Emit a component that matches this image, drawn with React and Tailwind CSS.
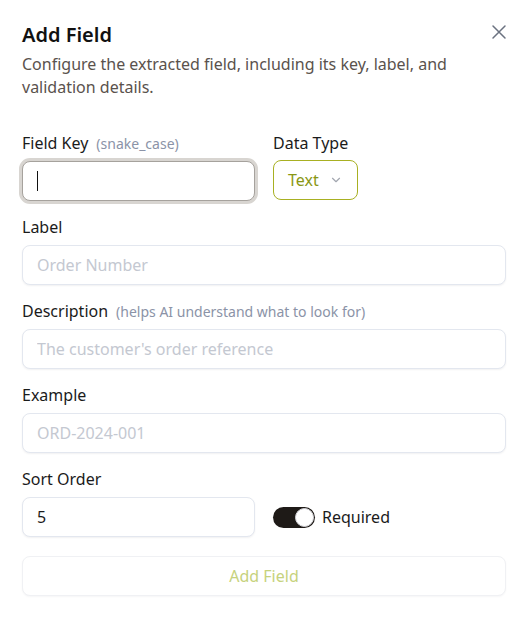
const Label = ({ children, hint }) => (
  <div className="flex items-baseline h-5 mb-2">
    <span className="text-base leading-5 text-[#1b1b1b]">{children}</span>
    {hint && <span className="ml-2 text-sm leading-5 text-[#8b93a7]">{hint}</span>}
  </div>
);

const Input = ({ placeholder, value }) => (
  <input
    readOnly
    value={value}
    placeholder={placeholder}
    className="w-full h-10 px-[14px] rounded-lg border border-[#e3e7ef] bg-white text-base text-[#1b1b1b] placeholder:text-[#c4c8d1] shadow-[0_1px_2px_rgba(16,24,40,0.06)] outline-none"
  />
);

export default function App() {
  return (
    <div
      className="min-h-[640px] bg-white pl-[22px] pr-6 pt-[21px]"
      style={{ fontFamily: '"Noto Sans", "Open Sans", sans-serif' }}
    >
      {/* Header */}
      <div className="flex items-start justify-between">
        <h1 className="text-xl leading-7 font-semibold text-[#111111]">Add Field</h1>
        <button className="mt-[3px] mr-[-1px] text-[#6b7280]">
          <svg width="16" height="16" viewBox="0 0 16 16" fill="none" stroke="currentColor" strokeWidth="1.5" strokeLinecap="round">
            <path d="M2 2l12 12M14 2L2 14" />
          </svg>
        </button>
      </div>
      <p className="mt-[4px] text-base leading-[23px] text-[#5a524d]">
        Configure the extracted field, including its key, label, and validation details.
      </p>

      {/* Form */}
      <div className="mt-[34px] flex flex-col gap-4">
        <div className="grid grid-cols-2 gap-[18px]">
          <div>
            <Label hint="(snake_case)">Field Key</Label>
            <div className="h-10 px-[14px] flex items-center rounded-lg border border-[#a6a29d] bg-white ring-[3px] ring-[#d8d5d1]">
              <span className="w-px h-5 bg-[#111111]" />
            </div>
          </div>
          <div>
            <Label>Data Type</Label>
            <button className="h-10 -mt-[1px] pl-[14px] pr-[14px] flex items-center gap-[10px] rounded-lg border border-[#a8b022] bg-white text-base text-[#8a9714]">
              Text
              <svg width="14" height="14" viewBox="0 0 24 24" fill="none" stroke="#a3a7b0" strokeWidth="2" strokeLinecap="round" strokeLinejoin="round">
                <path d="m6 9 6 6 6-6" />
              </svg>
            </button>
          </div>
        </div>

        <div>
          <Label>Label</Label>
          <Input placeholder="Order Number" />
        </div>

        <div>
          <Label hint="(helps AI understand what to look for)">Description</Label>
          <Input placeholder="The customer's order reference" />
        </div>

        <div>
          <Label>Example</Label>
          <Input placeholder="ORD-2024-001" />
        </div>

        <div>
          <Label>Sort Order</Label>
          <div className="grid grid-cols-2 gap-[18px] items-center">
            <Input value="5" />
            <div className="flex items-center gap-[7px]">
              <div className="w-[42px] h-[21px] rounded-full bg-[#1e1a17] flex items-center justify-end p-px">
                <span className="w-[19px] h-[19px] rounded-full bg-white border border-[#d4d4d8]" />
              </div>
              <span className="text-base text-[#1b1b1b]">Required</span>
            </div>
          </div>
        </div>

        <button className="mt-[3px] h-10 w-full rounded-lg border border-[#f0f1f4] bg-white text-base text-[#c6d27c] shadow-[0_1px_2px_rgba(16,24,40,0.04)]">
          Add Field
        </button>
      </div>
    </div>
  );
}
